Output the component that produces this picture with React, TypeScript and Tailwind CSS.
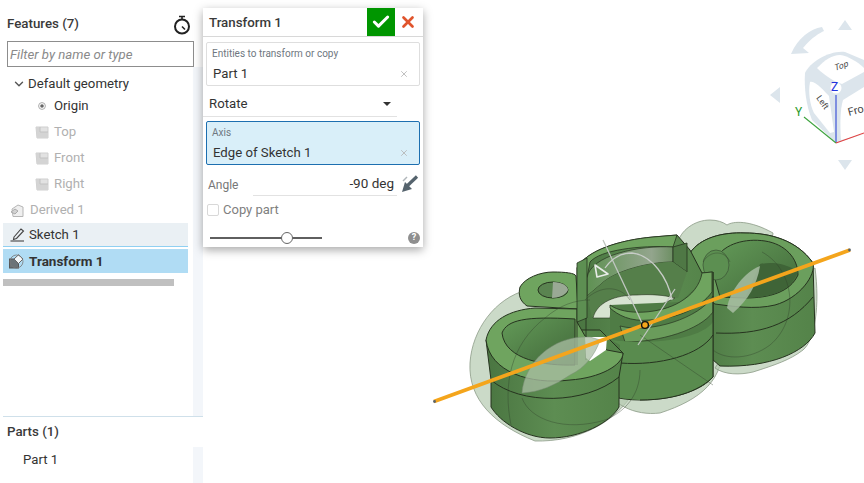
import React from 'react';
import { Check, ChevronDown, X } from 'lucide-react';

const PlaneIcon = () => (
  <svg width="14" height="13" viewBox="0 0 14 13" className="shrink-0">
    <path d="M1 1 H13 V12 H2 Z" fill="#e2e2e2" stroke="#cfcfcf" />
    <path d="M1 1 L5 1 V6 H13 V12 H2 Z" fill="#d4d4d4" />
    <path d="M5 1 V6 H13" fill="none" stroke="#c2c2c2" />
  </svg>
);

const PlaneRow = ({ label }: { label: string }) => (
  <div className="flex h-[26px] items-center pl-[35px] text-[#b0b0b0]">
    <PlaneIcon />
    <span className="ml-[5px]">{label}</span>
  </div>
);

const Sidebar = () => (
  <aside className="flex h-full w-[203px] shrink-0 flex-col text-[13.2px] text-[#333]">
    <div className="flex h-[41px] items-center justify-between pl-[7px] pr-[12px] pt-[6px]">
      <span className="text-[13.3px] font-medium text-[#3a3a3a]">Features (7)</span>
      <svg width="18" height="20" viewBox="0 0 18 20" className="mt-[3px]">
        <circle cx="9" cy="11.5" r="7" fill="none" stroke="#222" strokeWidth="2" />
        <path d="M6 1.5 H12 M9 2 V4.5 M9 11.5 L12 14.5" fill="none" stroke="#222" strokeWidth="1.6" />
      </svg>
    </div>
    <div className="mx-[7px] flex h-[26px] w-[187px] items-center border border-[#8d8d8d] px-[2px] pt-[2px] italic text-[#8a8a8a]">
      Filter by name or type
    </div>
    <div className="flex flex-1 min-h-0">
      <div className="flex-1 min-w-0 pt-[6px]">
        <div className="flex h-[22px] items-center pl-[12px]">
          <ChevronDown size={14} strokeWidth={2.4} className="text-[#555]" />
          <span className="ml-[2px]">Default geometry</span>
        </div>
        <div className="mb-[2px] flex h-[22px] items-center pl-[38px]">
          <svg width="8" height="8" viewBox="0 0 8 8">
            <circle cx="4" cy="4" r="3.4" fill="none" stroke="#aaa" />
            <circle cx="4" cy="4" r="1.8" fill="#666" />
          </svg>
          <span className="ml-[8px]">Origin</span>
        </div>
        <PlaneRow label="Top" />
        <PlaneRow label="Front" />
        <PlaneRow label="Right" />
        <div className="flex h-[26px] items-center pl-[10px] text-[#b0b0b0]">
          <svg width="15" height="15" viewBox="0 0 15 15">
            <path d="M2 6 L8 2 L13 4 V13.5 H3 Z" fill="#efefef" stroke="#b5b5b5" />
            <path d="M1 9 L5 6 L8 8 L5 11 Z" fill="#d2d2d2" stroke="#aaa" />
          </svg>
          <span className="ml-[5px]">Derived 1</span>
        </div>
        <div className="ml-[3px] flex h-[24px] w-[185px] items-center border-b border-[#8fd0f2] bg-[#eaf0f4] pl-[7px]">
          <svg width="15" height="15" viewBox="0 0 15 15">
            <path d="M4 10 L11 2 L13.5 4 L6.5 11.5 L3.5 12.5 Z" fill="none" stroke="#444" strokeWidth="1.1" />
            <path d="M0.5 14 H14" stroke="#444" strokeWidth="1.1" />
          </svg>
          <span className="ml-[4px]">Sketch 1</span>
        </div>
        <div className="ml-[3px] mt-[2px] flex h-[24px] w-[185px] items-center bg-[#b0dcf4] pl-[6px] text-[13.5px] font-bold">
          <svg width="15" height="15" viewBox="0 0 15 15">
            <rect x="0.5" y="5" width="9" height="9" fill="#6b7378" stroke="#555" />
            <path d="M9.5 0.8 L14 5 L9.5 9.5 L5 5 Z" fill="#f3f8fb" stroke="#666" />
            <circle cx="7.5" cy="7.5" r="6.5" fill="none" stroke="#777" strokeWidth="0.8" />
          </svg>
          <span className="ml-[5px]">Transform 1</span>
        </div>
        <div className="ml-[3px] mt-[6px] h-[7px] w-[171px] bg-[#c0c0c0]" />
      </div>
      <div className="w-[10px] shrink-0 bg-[#f3f6fa]" />
    </div>
    <div className="ml-[3px] h-px bg-[#cfe0ea]" />
    <div className="flex h-[30px] items-center pl-[7px] text-[13.3px] font-medium text-[#3a3a3a]">Parts (1)</div>
    <div className="flex flex-1 max-h-[36px]">
      <div className="flex-1 pl-[23px] pt-[3px]">Part 1</div>
      <div className="w-[10px] shrink-0 bg-[#f3f6fa]" />
    </div>
  </aside>
);

const QueryField = ({ label, value, active }: { label: string; value: string; active?: boolean }) => (
  <div
    className={
      active
        ? 'mx-[3px] h-[44px] rounded-[2px] border border-[#1d6fb0] bg-[#d9eff9] pl-[5px] pr-[10px] pt-[4px]'
        : 'mx-[3px] h-[44px] rounded-[2px] border border-[#dedede] bg-white pl-[5px] pr-[10px] pt-[4px]'
    }
  >
    <div className="text-[10px] leading-[14px] text-[#6f7780]">{label}</div>
    <div className="mt-[3px] flex h-[20px] items-center justify-between pl-px text-[13.2px] text-[#333]">
      <span>{value}</span>
      <X size={10} className="text-[#b5b5b5]" />
    </div>
  </div>
);

const TransformDialog = () => (
  <div className="absolute left-0 top-[8px] h-[239px] w-[220px] bg-white text-[13.2px] text-[#333] shadow-[0_3px_9px_rgba(0,0,0,0.35)]">
    <div className="flex h-[29px] items-stretch border-b border-[#d8d8d8]">
      <span className="flex flex-1 items-center pl-[6px] pt-[2px] text-[13.3px] font-medium text-[#3a3a3a]">Transform 1</span>
      <div className="flex h-[28px] w-[28px] items-center justify-center bg-[#009600]">
        <Check size={20} strokeWidth={3.6} className="text-white" />
      </div>
      <div className="flex w-[28px] items-center justify-center pr-[2px]">
        <X size={18} strokeWidth={3.6} className="text-[#e0542c]" />
      </div>
    </div>
    <div className="mt-[5px]">
      <QueryField label="Entities to transform or copy" value="Part 1" />
    </div>
    <div className="mt-[6px] flex h-[25px] w-[194px] items-center justify-between border-b border-[#e2e2e2] pl-[6px] pr-[6px]">
      <span>Rotate</span>
      <div className="h-0 w-0 border-x-[4px] border-t-[4px] border-x-transparent border-t-[#333]" />
    </div>
    <div className="mt-[4px]">
      <QueryField label="Axis" value="Edge of Sketch 1" active />
    </div>
    <div className="flex h-[31px] items-end pl-[5px]">
      <span className="w-[45px] pb-[2px] text-[12px] text-[#777]">Angle</span>
      <span className="w-[144px] border-b border-[#e2e2e2] pb-[2px] pr-[3px] text-right text-[13.5px]">-90 deg</span>
      <svg width="18" height="18" viewBox="0 0 18 18" className="mb-[3px] ml-[4px]">
        <path d="M1 17 L4 7 L11 14 Z" fill="#55636d" />
        <path d="M6 11 L16 1.5" stroke="#55636d" strokeWidth="3.2" />
        <path d="M2 6 L6 2" stroke="#b0b6ba" strokeWidth="1.4" />
      </svg>
    </div>
    <div className="mt-[7px] flex h-[14px] items-center pl-[4px] text-[13px] text-[#808080]">
      <div className="h-[12px] w-[12px] rounded-[2px] border border-[#d8d8d8]" />
      <span className="ml-[4px]">Copy part</span>
    </div>
    <div className="mt-[15px] flex items-center justify-between pl-[7px] pr-[3px]">
      <div className="relative h-[2px] w-[112px] bg-[#5f5f5f]">
        <div className="absolute left-[71px] top-[-5px] h-[12px] w-[12px] rounded-full border border-[#666] bg-white" />
      </div>
      <div className="flex h-[12px] w-[12px] items-center justify-center rounded-full bg-[#8f8f8f] text-[9px] font-bold text-white">?</div>
    </div>
  </div>
);

const ViewCube = () => (
  <g>
    <g fill="#dce5ec">
      <path d="M845 20 L838 30 H852 Z" />
      <path d="M845 170 L838 160 H852 Z" />
      <path d="M770 95 L780 87 V103 Z" />
      <path d="M791 54 L809 53 L803 48 C812 37 820 33 824 31 L822 27 C810 29 798 38 791 54 Z" />
    </g>
    <path d="M805 73 C810 62 830 50 845 52 L864 60 V134 L836 143 L812 120 C806 105 804 88 805 73 Z" fill="#dce5ec" />
    <path d="M817 68 C825 60 832 55 840 55 C848 56 858 62 864 68 V72 L842 84 C835 82 825 76 817 68 Z" fill="#fff" />
    <path d="M810 82 C815 80 825 92 829 96 L834 132 L830 133 L814 113 C810 105 808 92 810 82 Z" fill="#fff" />
    <path d="M843 100 L864 87 V134 L841 140 C840 125 840 110 843 100 Z" fill="#fff" />
    <text x="0" y="0" transform="translate(835 71) rotate(-20) skewX(-15)" fontSize="8.5" fontFamily="Roboto, sans-serif" fill="#444">Top</text>
    <text x="0" y="0" transform="translate(816 98) rotate(55)" fontSize="8.5" fontFamily="Roboto, sans-serif" fill="#444">Left</text>
    <text x="0" y="0" transform="translate(849 116) rotate(-15)" fontSize="11" fontFamily="Roboto, sans-serif" fill="#444">Fro</text>
    <circle cx="836" cy="88" r="5.5" fill="#fff" />
    <path d="M836 95 V143" stroke="#3147d6" strokeWidth="1.1" />
    <path d="M804 117 L836 143" stroke="#3da33d" strokeWidth="1.1" />
    <path d="M836 143 L864 133" stroke="#e04040" strokeWidth="1.1" />
    <text x="831" y="91" fontSize="12" fontFamily="Roboto, sans-serif" fill="#2233dd">Z</text>
    <text x="795" y="116" fontSize="12" fontFamily="Roboto, sans-serif" fill="#2a9a2a">Y</text>
  </g>
);

const Model = () => (
  <g strokeLinejoin="round">
    <defs>
      <linearGradient id="wall" x1="0" x2="1" y1="0" y2="0">
        <stop offset="0" stopColor="#4a7541" />
        <stop offset="0.5" stopColor="#5d8d52" />
        <stop offset="1" stopColor="#548349" />
      </linearGradient>
      <linearGradient id="hole" x1="0" x2="1" y1="0" y2="1">
        <stop offset="0" stopColor="#639a58" />
        <stop offset="1" stopColor="#42693a" />
      </linearGradient>
      <linearGradient id="back" x1="0" x2="1" y1="0" y2="0">
        <stop offset="0" stopColor="#5f9153" />
        <stop offset="0.75" stopColor="#93a58d" />
        <stop offset="1" stopColor="#6d8f63" />
      </linearGradient>
    </defs>

    {/* rotated preview behind the part */}
    <g fill="#b5cbb0" fillOpacity="0.7" stroke="#8b9a87" strokeWidth="0.8">
      <path d="M470 363 C472 330 495 298 527 290 C590 280 640 330 640 380 C620 425 575 442 535 441 C495 425 468 400 470 363 Z" />
      <path d="M600 380 L722 340 C726 380 700 400 660 413 C635 416 610 405 600 380 Z" />
      <path d="M677 245 C680 230 695 220 710 220 C717 220 723 222 727 225 C733 221 750 220 773 233 L770 260 H690 Z" />
      <path d="M760 300 L815 268 C820 305 815 340 803 350 C790 360 775 365 753 372 C740 375 725 375 715 368 Z" />
    </g>

    {/* right lobe */}
    <path d="M690 253 C700 238 722 232 745 233 C770 233 797 240 813 263 L815 333 C805 352 770 368 720 366 L690 340 Z" fill="url(#wall)" stroke="#26331f" />
    <path d="M690 253 C700 238 722 232 745 233 C770 233 797 240 813 263 C816 275 800 298 775 305 C755 310 730 306 715 304 L690 290 Z" fill="#6b9f5d" stroke="#26331f" />
    <path d="M717 257 C725 244 745 238 765 241 C785 244 798 258 798 275 C790 292 770 298 745 298 L720 297 L713 272 Z" fill="url(#hole)" stroke="#26331f" />
    <path d="M745 298 C770 298 790 292 798 272 C785 262 770 262 760 264 Z" fill="#3f6437" />
    <ellipse cx="716" cy="265" rx="13" ry="15" fill="#5c8f51" stroke="#3f5a38" strokeWidth="0.8" />
    <path d="M727 308 C730 290 745 272 760 266 C757 285 748 300 733 313 Z" fill="#a8bda3" fillOpacity="0.85" />
    <path d="M716 333 C760 335 790 325 813 297" fill="none" stroke="#26331f" />

    {/* middle lobe */}
    <path d="M577 268 C587 250 620 240 653 237 L677 235 L690 250 L702 273 L713 272 V377 C700 392 670 400 640 400 C620 400 600 395 590 385 L577 330 Z" fill="url(#wall)" stroke="#26331f" />
    <path d="M577 268 C587 250 620 240 653 237 L677 235 L673 247 C640 245 600 250 590 262 L587 278 Z" fill="#6fa45f" stroke="#26331f" strokeWidth="0.8" />
    <path d="M587 278 C590 255 640 245 673 247 V262 C650 262 615 270 600 285 L587 296 Z" fill="url(#back)" stroke="#26331f" strokeWidth="0.7" />
    <path d="M673 247 L687 243 V272 L673 262 Z" fill="#4f7845" stroke="#26331f" strokeWidth="0.8" />
    <path d="M587 296 L600 285 C615 270 650 262 673 262 L687 272 L678 298 H610 L592 318 Z" fill="#557f4a" />
    <path d="M593 318 C597 302 615 295 637 295 C650 294 665 295 675 298 L660 305 L612 306 L610 318 Z" fill="#d7e4d1" stroke="#26331f" strokeWidth="0.6" />
    <path d="M610 305 L680 302 L713 272 V372 L610 372 Z" fill="#4f7c45" />
    <path d="M610 305 C625 316 660 314 680 302 C692 295 700 285 702 273 L712 272 V292 C700 308 680 318 650 320 C630 322 618 315 610 308 Z" fill="#6fa45f" stroke="#26331f" strokeWidth="0.8" />
    <path d="M620 326 C650 334 700 318 713 296 V312 C700 330 660 342 625 342 Z" fill="#6a9c5b" stroke="#26331f" strokeWidth="0.7" />
    <path d="M611 340 C650 345 700 340 713 322 V377 C700 392 670 400 640 400 L620 398 V345 Z" fill="#598b4e" />
    <path d="M640 400 C680 400 702 388 713 377 M620 363 C660 366 700 355 713 335 M713 272 V377" fill="none" stroke="#26331f" />

    {/* left lobe */}
    <path d="M486 340 L491 380 V407 C500 422 525 438 550 438 C580 438 610 423 619 407 V377 L623 353 L600 330 H500 Z" fill="url(#wall)" stroke="#26331f" />
    <path d="M527 306 C520 301 518 295 520 287 C525 278 540 272 553 272 C565 272 575 273 576 276 L578 309 Z" fill="#6fa45f" stroke="#26331f" />
    <ellipse cx="553" cy="290" rx="15" ry="8" fill="#5a8450" stroke="#26331f" />
    <path d="M553 282 C562 282 568 286 568 290 C566 295 558 298 552 298 Z" fill="#9aa995" />
    <path d="M486 340 C490 320 510 310 535 308 L577 309 L577 322 L585 336 L607 350 L623 353 C623 365 600 378 570 380 C530 385 490 372 486 340 Z" fill="#6fa45f" stroke="#26331f" />
    <path d="M502 333 C507 320 525 316 575 319 V365 C545 366 505 360 502 333 Z" fill="url(#hole)" stroke="#26331f" />
    <path d="M577 263 L587 258 L587 318 L577 322 Z" fill="#5d8f52" stroke="#26331f" strokeWidth="0.8" />
    <path d="M577 322 V365 M586 318 V360" fill="none" stroke="#26331f" strokeWidth="0.9" />
    <path d="M585 337 H607 L606 350 L590 361 L586 358 Z" fill="#fff" />
    <path d="M522 393 C525 360 555 335 590 337 L600 340 C595 355 585 368 570 375 C555 385 540 392 522 393 Z" fill="#a9bda3" fillOpacity="0.75" stroke="#7d8c78" strokeWidth="0.5" />
    <path d="M491 380 C520 405 585 405 619 377" fill="none" stroke="#26331f" />

    {/* preview outlines showing through the part */}
    <g fill="none" stroke="#2f3f2a" strokeOpacity="0.55" strokeWidth="0.7">
      <path d="M511 425 C503 385 510 345 545 318 C560 305 575 300 590 300" />
      <path d="M522 398 C530 420 565 432 605 420 C625 412 640 395 640 370" />
      <path d="M585 300 C600 285 620 285 630 300 M703 262 C710 250 725 250 730 262" />
      <path d="M762 252 C795 270 800 320 770 345 C750 360 725 360 713 350" />
      <path d="M640 335 L713 385" />
    </g>

    {/* rotation manipulator */}
    <path d="M603 240 L643 325 M675 289 L638 345" fill="none" stroke="#bfc5bf" strokeWidth="1.3" />
    <path d="M605 268 C612 258 622 253 632 253 C652 255 668 278 672 300" fill="none" stroke="#c7ccc7" strokeWidth="1.3" />
    <path d="M595 265 L597 277 L608 274 Z" fill="none" stroke="#e7ebe7" strokeWidth="1.6" />
    <path d="M434 401.5 L850 250" stroke="#f4a51c" strokeWidth="3.8" />
    <circle cx="434.5" cy="401.5" r="1.4" fill="#59636b" />
    <circle cx="849.5" cy="250" r="1.4" fill="#59636b" />
    <circle cx="645" cy="325" r="3.4" fill="#f4a51c" stroke="#111" strokeWidth="1.4" />
  </g>
);

export default function App() {
  return (
    <div className="flex h-[483px] w-[864px] overflow-hidden bg-white font-['Roboto',sans-serif]">
      <Sidebar />
      <main className="relative flex-1">
        <svg className="h-full w-full" viewBox="203 0 661 483">
          <Model />
          <ViewCube />
        </svg>
        <TransformDialog />
      </main>
    </div>
  );
}
